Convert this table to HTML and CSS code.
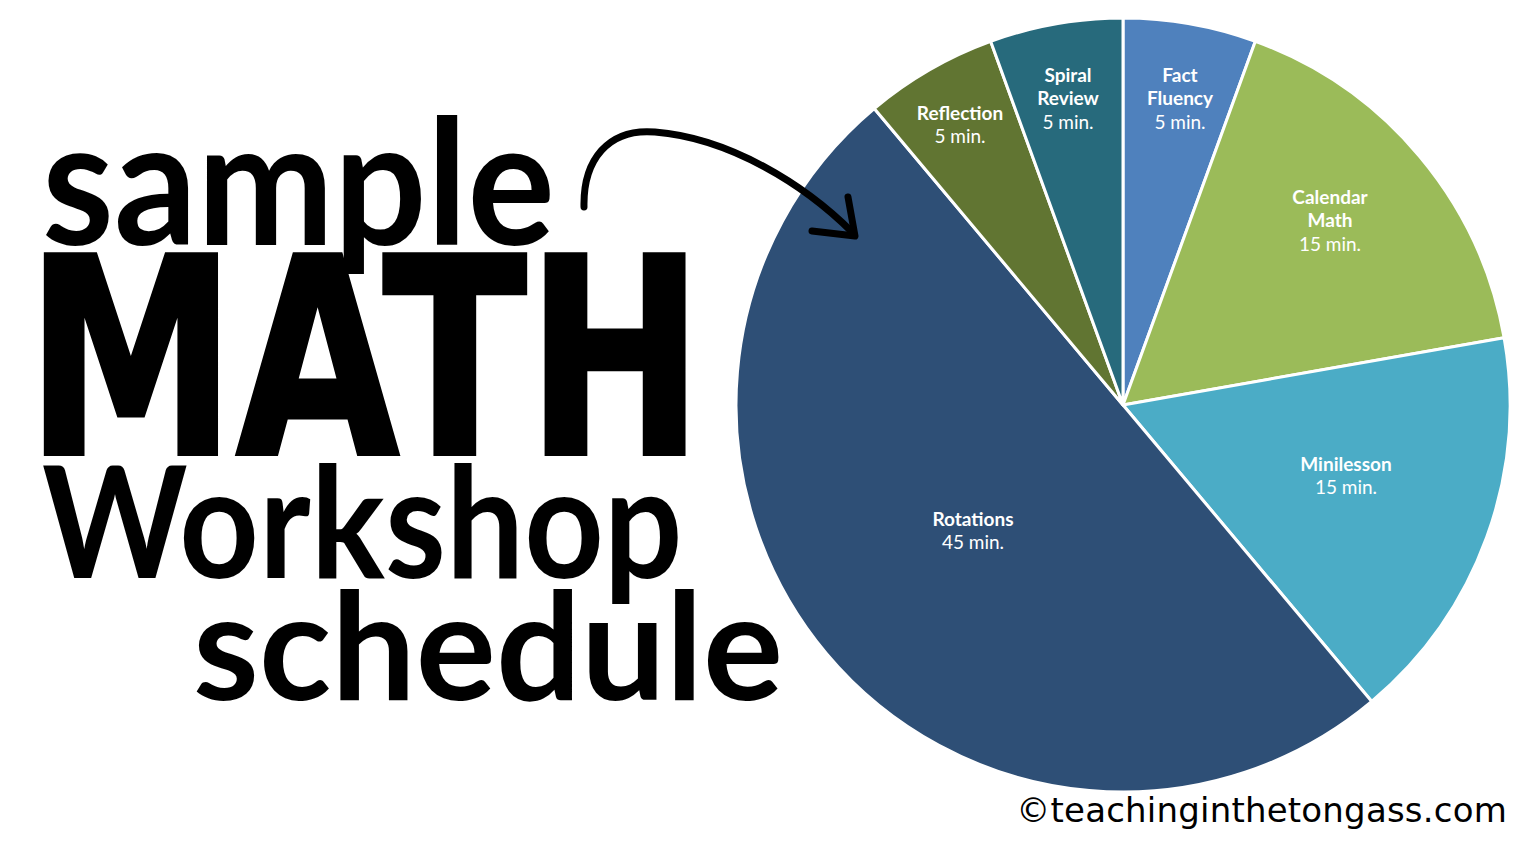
FILE: index.html
```html
<!DOCTYPE html>
<html>
<head>
<meta charset="utf-8">
<link rel="stylesheet" href="styles.css">
</head>
<body>
<div class="page">
  <div class="left">
    <div class="line sample"><span>sample</span></div>
    <div class="line math"><span>MATH</span></div>
    <div class="line workshop"><span>Workshop</span></div>
    <div class="line schedule"><span>schedule</span></div>
  </div>
  <div class="right">
    <svg class="pie" width="780" height="780" viewBox="0 0 780 780">
      <g class="slices">
        <path fill="#4f81bd" d="M390,390 L390,3 A387,387 0 0 1 522.36,26.34 Z"/>
        <path fill="#9bbb59" d="M390,390 L522.36,26.34 A387,387 0 0 1 771.12,322.80 Z"/>
        <path fill="#4bacc6" d="M390,390 L771.12,322.80 A387,387 0 0 1 638.76,686.46 Z"/>
        <path fill="#2e4f76" d="M390,390 L638.76,686.46 A387,387 0 0 1 141.24,93.54 Z"/>
        <path fill="#617532" d="M390,390 L141.24,93.54 A387,387 0 0 1 257.64,26.34 Z"/>
        <path fill="#276a7c" d="M390,390 L257.64,26.34 A387,387 0 0 1 390,3 Z"/>
      </g>
      <g class="labels">
        <text x="447" y="67" class="b">Fact</text>
        <text x="447" y="90" class="b">Fluency</text>
        <text x="447" y="114">5 min.</text>
        <text x="335" y="67" class="b">Spiral</text>
        <text x="335" y="90" class="b">Review</text>
        <text x="335" y="114">5 min.</text>
        <text x="227" y="105" class="b">Reflection</text>
        <text x="227" y="128">5 min.</text>
        <text x="597" y="189" class="b">Calendar</text>
        <text x="597" y="212" class="b">Math</text>
        <text x="597" y="236">15 min.</text>
        <text x="613" y="456" class="b">Minilesson</text>
        <text x="613" y="479">15 min.</text>
        <text x="240" y="511" class="b">Rotations</text>
        <text x="240" y="534">45 min.</text>
      </g>
    </svg>
    <div class="copy">©teachinginthetongass.com</div>
  </div>
  <svg class="arrow" width="300" height="140" viewBox="570 115 300 140">
    <path d="M584,207 C583,160 608,128 655,132 C730,138 805,185 852,232" />
    <path d="M812,231 L855,236 L848,197" />
  </svg>
</div>
</body>
</html>
```
FILE: styles.css
```css
body {
  margin: 0;
  background: #ffffff;
}
.page {
  position: relative;
  display: flex;
  width: 1536px;
  height: 853px;
  overflow: hidden;
  background: #ffffff;
}
.left {
  width: 733px;
  box-sizing: border-box;
  padding-top: 100px;
  padding-left: 42px;
  color: #000;
}
.line {
  white-space: nowrap;
}
.line span {
  display: inline-block;
  transform-origin: left center;
}
.sample {
  font-family: Lato, "Noto Sans", sans-serif;
  font-weight: 700;
  font-size: 174px;
  height: 155px;
  line-height: 155px;
}
.sample span {
  transform: scaleX(0.94);
}
.math {
  font-family: "DejaVu Sans", sans-serif;
  font-weight: 700;
  font-size: 274px;
  height: 210px;
  line-height: 210px;
  margin-left: -16px;
}
.math span {
  transform: scaleX(0.77);
  -webkit-text-stroke: 4px #000;
}
.workshop {
  font-family: Lato, "Noto Sans", sans-serif;
  font-weight: 700;
  font-size: 155px;
  height: 106px;
  line-height: 106px;
}
.workshop span {
  transform: scaleX(0.895);
}
.schedule {
  font-family: Lato, "Noto Sans", sans-serif;
  font-weight: 700;
  font-size: 150px;
  height: 142px;
  line-height: 142px;
  padding-left: 151px;
}
.right {
  width: 780px;
  padding-top: 15px;
  display: flex;
  flex-direction: column;
}
.pie {
  display: block;
}
.slices path {
  stroke: #ffffff;
  stroke-width: 3;
  stroke-linejoin: round;
}
.labels text {
  font-family: Lato, "Noto Sans", sans-serif;
  font-size: 19px;
  fill: #ffffff;
  text-anchor: middle;
}
.labels text.b {
  font-weight: 700;
}
.copy {
  margin-top: -5px;
  padding-right: 6px;
  text-align: right;
  font-family: "DejaVu Sans", sans-serif;
  font-size: 34px;
  line-height: 40px;
  letter-spacing: 0.2px;
  color: #000;
}
.arrow {
  position: absolute;
  left: 570px;
  top: 115px;
  fill: none;
  stroke: #000;
  stroke-width: 7;
  stroke-linecap: round;
  stroke-linejoin: round;
}
```
